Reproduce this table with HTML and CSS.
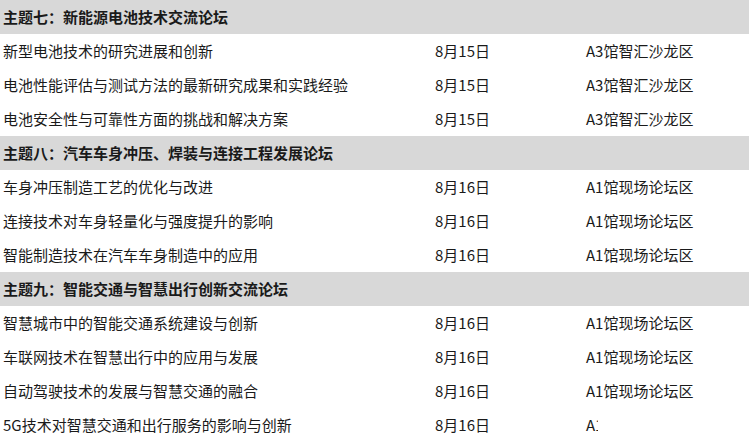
FILE: index.html
```html
<!DOCTYPE html>
<html lang="zh">
<head>
<meta charset="utf-8">
<link rel="stylesheet" href="styles.css">
</head>
<body>
<div class="table">
  <div class="topic">主题七：新能源电池技术交流论坛</div>
  <div class="cell">新型电池技术的研究进展和创新</div><div class="cell">8月15日</div><div class="cell">A3馆智汇沙龙区</div>
  <div class="cell">电池性能评估与测试方法的最新研究成果和实践经验</div><div class="cell">8月15日</div><div class="cell">A3馆智汇沙龙区</div>
  <div class="cell">电池安全性与可靠性方面的挑战和解决方案</div><div class="cell">8月15日</div><div class="cell">A3馆智汇沙龙区</div>
  <div class="topic">主题八：汽车车身冲压、焊装与连接工程发展论坛</div>
  <div class="cell">车身冲压制造工艺的优化与改进</div><div class="cell">8月16日</div><div class="cell">A1馆现场论坛区</div>
  <div class="cell">连接技术对车身轻量化与强度提升的影响</div><div class="cell">8月16日</div><div class="cell">A1馆现场论坛区</div>
  <div class="cell">智能制造技术在汽车车身制造中的应用</div><div class="cell">8月16日</div><div class="cell">A1馆现场论坛区</div>
  <div class="topic">主题九：智能交通与智慧出行创新交流论坛</div>
  <div class="cell">智慧城市中的智能交通系统建设与创新</div><div class="cell">8月16日</div><div class="cell">A1馆现场论坛区</div>
  <div class="cell">车联网技术在智慧出行中的应用与发展</div><div class="cell">8月16日</div><div class="cell">A1馆现场论坛区</div>
  <div class="cell">自动驾驶技术的发展与智慧交通的融合</div><div class="cell">8月16日</div><div class="cell">A1馆现场论坛区</div>
  <div class="cell">5G技术对智慧交通和出行服务的影响与创新</div><div class="cell">8月16日</div><div class="cell covered">A1馆现场论坛区<span class="mask"></span></div>
</div>
</body>
</html>
```
FILE: styles.css
```css
html, body {
  margin: 0;
  padding: 0;
  background: #ffffff;
}
body {
  font-family: "Noto Sans CJK SC", "Microsoft YaHei", sans-serif;
  font-size: 15px;
  color: #1a1a1a;
  width: 749px;
  height: 442px;
  overflow: hidden;
}
.table {
  display: grid;
  grid-template-columns: 432px 151px 1fr;
  grid-auto-rows: 34px;
}
.topic {
  grid-column: 1 / -1;
  background: #d8d8d8;
  font-weight: 700;
  line-height: 34px;
  padding-left: 3px;
  color: #1a1a1a;
}
.cell {
  line-height: 34px;
  padding-left: 3px;
  white-space: nowrap;
}
.covered {
  position: relative;
}
.mask {
  position: absolute;
  z-index: 1;
  left: 15px;
  top: 6px;
  width: 100px;
  height: 22px;
  background: #ffffff;
}
```
